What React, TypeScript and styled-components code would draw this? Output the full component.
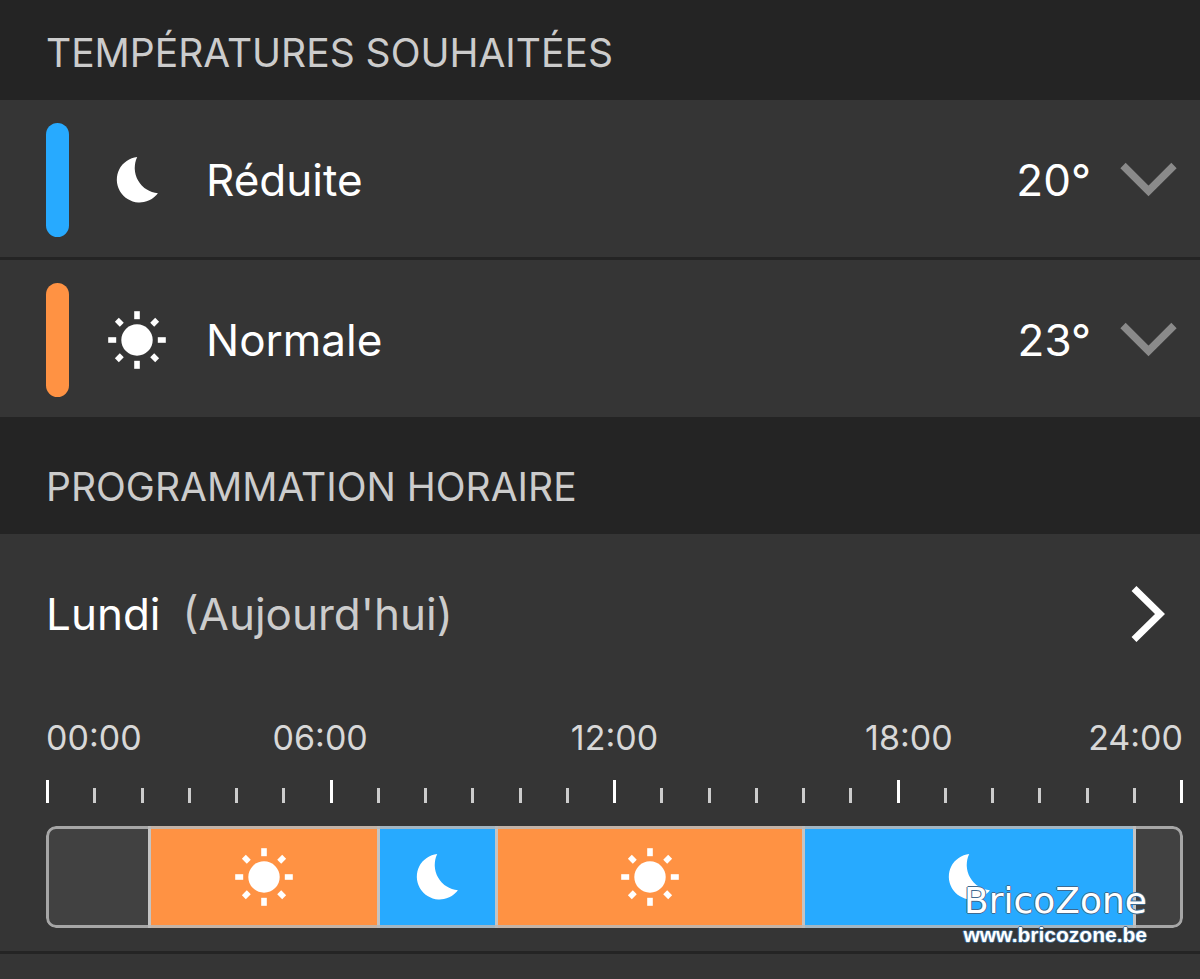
import React from 'react';
import styled, { createGlobalStyle } from 'styled-components';

const colors = {
  page: '#353535',
  band: '#242424',
  idle: '#414141',
  reduced: '#27aaff',
  normal: '#ff9243',
  muted: '#cccccc',
};

const GlobalStyle = createGlobalStyle`
  * { box-sizing: border-box; }
  body {
    margin: 0;
    background: ${colors.page};
    color: #fff;
    font-family: Inter, "Liberation Sans", sans-serif;
  }
  button {
    font: inherit;
    color: inherit;
    background: none;
    border: 0;
    padding: 0;
    cursor: pointer;
  }
`;

const Page = styled.main`
  position: relative;
  min-height: 100vh;
  overflow: hidden;
`;

const SectionTitle = styled.h2<{ $tall?: boolean }>`
  margin: 0;
  padding: ${(p) => (p.$tall ? '46px 46px 23px' : '29px 46px 23px')};
  background: ${colors.band};
  color: ${colors.muted};
  font-size: 39px;
  font-weight: 400;
  line-height: 48px;
`;

const List = styled.ul`
  list-style: none;
  margin: 0;
  padding: 0;
`;

const ListItem = styled.li`
  & + & {
    border-top: 3px solid ${colors.band};
  }
`;

const RowButton = styled.button`
  display: flex;
  align-items: center;
  width: 100%;
  font-size: 44px;
  line-height: 56px;
  text-align: left;
`;

const TemperatureRow = styled(RowButton)`
  height: 157px;
  padding: 2px 22px 0 46px;
`;

const Marker = styled.span<{ $color: string }>`
  width: 23px;
  height: 114px;
  margin-right: 39px;
  border-radius: 12px;
  background: ${(p) => p.$color};
`;

const RowLabel = styled.span`
  flex: 1;
  margin-left: 40px;
`;

const RowValue = styled.span`
  margin-right: 29px;
`;

const Icon = styled.svg`
  display: block;
  flex: none;
`;

const DayRow = styled(RowButton)`
  height: 160px;
  padding: 0 34px 0 46px;
`;

const Today = styled.span`
  flex: 1;
  margin-left: 22px;
  color: ${colors.muted};
`;

const Schedule = styled.div`
  padding: 22px 17px 23px 46px;
  border-bottom: 3px solid ${colors.band};
`;

const HourLabels = styled.div`
  display: grid;
  grid-template-columns: 127px 1fr 1fr 1fr 127px;
  color: #d8d8d8;
  font-size: 34px;
  line-height: 44px;
  text-align: center;

  & > :first-child { text-align: left; }
  & > :last-child { text-align: right; }
`;

const Ruler = styled.div`
  display: flex;
  justify-content: space-between;
  align-items: flex-end;
  height: 23px;
  margin: 20px 0 23px;
`;

const Tick = styled.span<{ $major: boolean }>`
  width: 3px;
  height: ${(p) => (p.$major ? 23 : 15)}px;
  background: ${(p) => (p.$major ? '#fff' : colors.muted)};
`;

const Bar = styled.div`
  position: relative;
  display: flex;
  height: 102px;
  padding-right: 3px;
  border-radius: 10px;
  background: ${colors.idle};
  overflow: hidden;

  &::after {
    content: '';
    position: absolute;
    inset: 0;
    border: 3px solid rgba(184, 184, 184, 0.85);
    border-radius: 10px;
  }
`;

const Segment = styled.div<{ $minutes: number; $color: string }>`
  width: ${(p) => (p.$minutes / 1440) * 100}%;
  display: flex;
  align-items: center;
  justify-content: center;
  background: ${(p) => p.$color};

  & + & {
    border-left: 3px solid #c4c4c4;
  }
`;

const Watermark = styled.a`
  position: absolute;
  top: 881px;
  right: 53px;
  color: #fff;
  text-align: right;
  text-decoration: none;
  text-shadow: 1px 0 #3f6a90, -1px 0 #3f6a90, 0 1px #3f6a90, 0 -1px #3f6a90;
`;

const WatermarkName = styled.span`
  display: block;
  font-family: "DejaVu Sans", sans-serif;
  font-size: 36px;
  line-height: 40px;
`;

const WatermarkSite = styled.span`
  display: block;
  font-family: "Liberation Sans", sans-serif;
  font-size: 21px;
  font-weight: 700;
  line-height: 28px;
`;

const SunIcon = () => (
  <Icon width="58" height="58" viewBox="-29 -29 58 58" fill="#fff" aria-hidden="true">
    <circle r="15.7" />
    {[0, 45, 90, 135, 180, 225, 270, 315].map((angle) => (
      <rect
        key={angle}
        x="-2.8"
        y={angle % 90 ? -28.5 : -28.8}
        width="5.6"
        height={angle % 90 ? 7 : 8}
        transform={`rotate(${angle})`}
      />
    ))}
  </Icon>
);

const MoonIcon = () => (
  <Icon width="58" height="58" viewBox="0 0 58 58" fill="#fff" aria-hidden="true">
    <path d="M29.2 6A22.8 22.8 0 1 0 49.9 42.3A25.5 25.5 0 0 1 29.2 6Z" />
  </Icon>
);

const ChevronDown = () => (
  <Icon width="58" height="36" viewBox="0 0 58 36" fill="none" aria-hidden="true">
    <path d="M3 3.500L28.500 29L54 3.500" stroke="#8a8a8a" strokeWidth="7.500" />
  </Icon>
);

const ChevronRight = () => (
  <Icon width="36" height="58" viewBox="0 0 36 58" fill="none" aria-hidden="true">
    <path d="M4 3.500L30 29L4 54.500" stroke="#fff" strokeWidth="7" />
  </Icon>
);

type Mode = 'idle' | 'reduced' | 'normal';

const temperatures: { mode: Mode; label: string; value: string }[] = [
  { mode: 'reduced', label: 'Réduite', value: '20°' },
  { mode: 'normal', label: 'Normale', value: '23°' },
];

const segments: { mode: Mode; minutes: number }[] = [
  { mode: 'idle', minutes: 130 },
  { mode: 'normal', minutes: 290 },
  { mode: 'reduced', minutes: 150 },
  { mode: 'normal', minutes: 390 },
  { mode: 'reduced', minutes: 420 },
  { mode: 'idle', minutes: 60 },
];

const hours = ['00:00', '06:00', '12:00', '18:00', '24:00'];

const ModeIcon = ({ mode }: { mode: Mode }) => {
  if (mode === 'normal') return <SunIcon />;
  if (mode === 'reduced') return <MoonIcon />;
  return null;
};

export default function App() {
  return (
    <Page>
      <GlobalStyle />
      <section>
        <SectionTitle>TEMPÉRATURES SOUHAITÉES</SectionTitle>
        <List>
          {temperatures.map(({ mode, label, value }) => (
            <ListItem key={mode}>
              <TemperatureRow type="button">
                <Marker $color={colors[mode]} />
                <ModeIcon mode={mode} />
                <RowLabel>{label}</RowLabel>
                <RowValue>{value}</RowValue>
                <ChevronDown />
              </TemperatureRow>
            </ListItem>
          ))}
        </List>
      </section>
      <section>
        <SectionTitle $tall>PROGRAMMATION HORAIRE</SectionTitle>
        <DayRow type="button">
          <span>Lundi</span>
          <Today>(Aujourd'hui)</Today>
          <ChevronRight />
        </DayRow>
        <Schedule>
          <HourLabels>
            {hours.map((hour) => (
              <span key={hour}>{hour}</span>
            ))}
          </HourLabels>
          <Ruler>
            {Array.from({ length: 25 }, (_, hour) => (
              <Tick key={hour} $major={hour % 6 === 0} />
            ))}
          </Ruler>
          <Bar>
            {segments.map(({ mode, minutes }, index) => (
              <Segment key={index} $minutes={minutes} $color={colors[mode]}>
                <ModeIcon mode={mode} />
              </Segment>
            ))}
          </Bar>
        </Schedule>
      </section>
      <Watermark href="#">
        <WatermarkName>BricoZone</WatermarkName>
        <WatermarkSite>www.bricozone.be</WatermarkSite>
      </Watermark>
    </Page>
  );
}
